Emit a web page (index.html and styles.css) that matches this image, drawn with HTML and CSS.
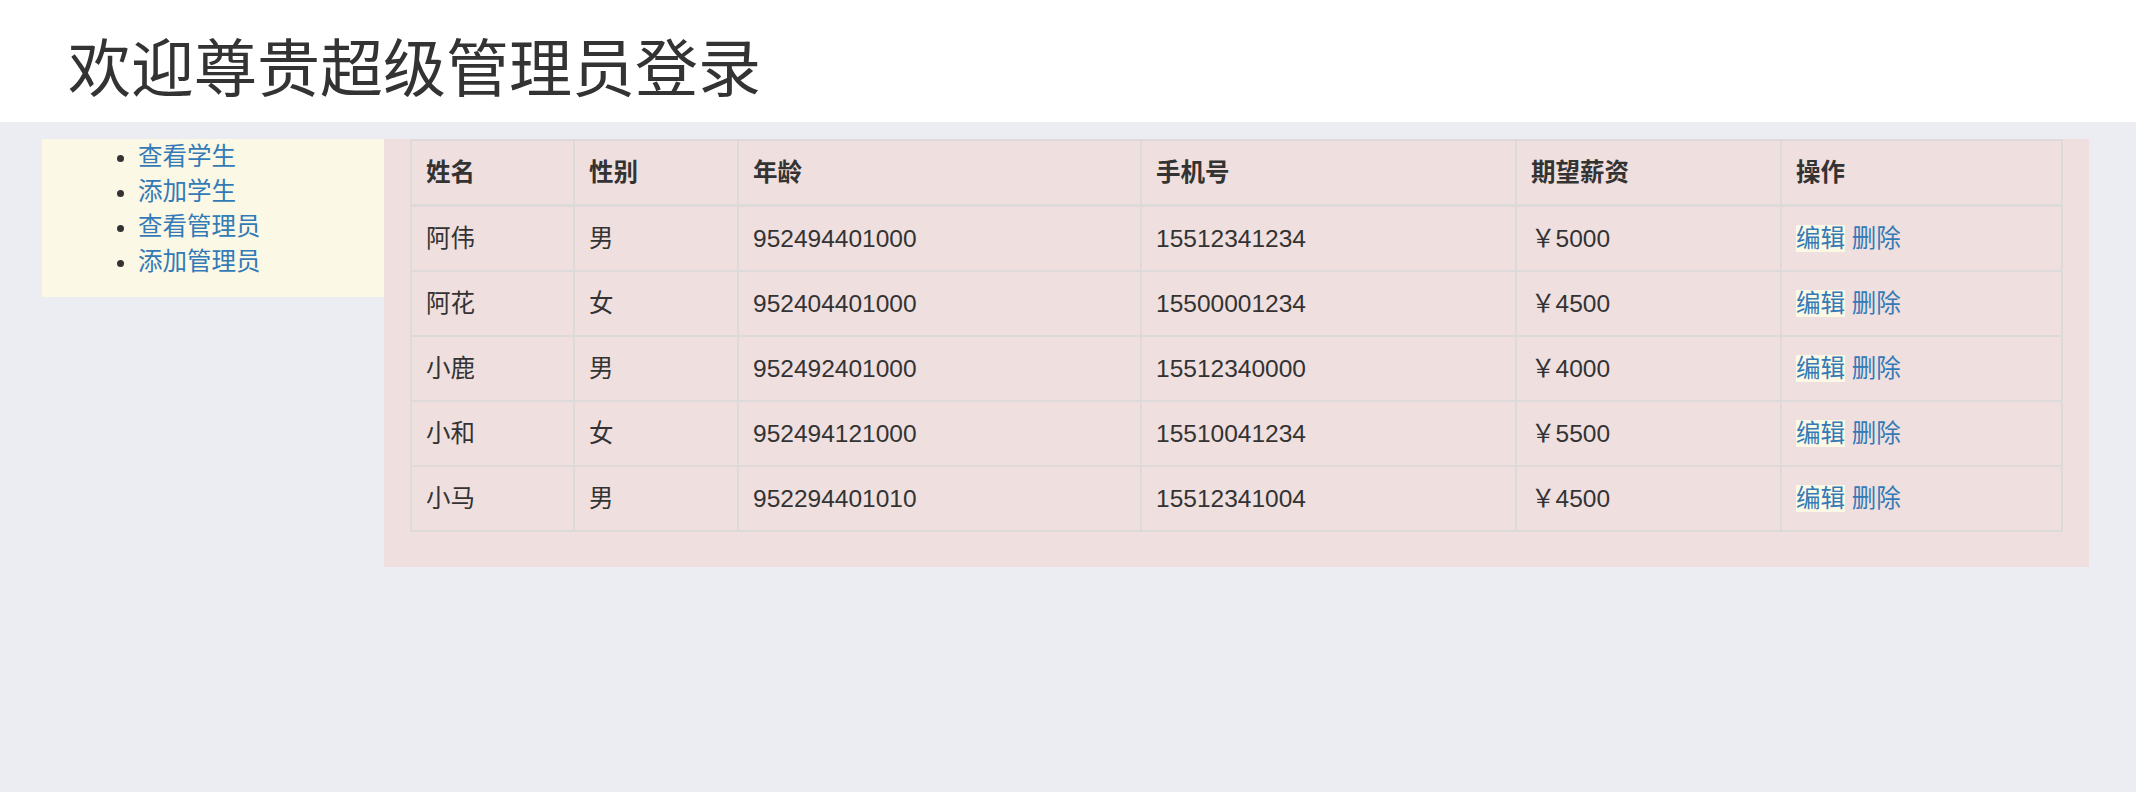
FILE: index.html
```html
<!DOCTYPE html>
<html lang="zh-CN">
<head>
<meta charset="utf-8">
<title>管理员</title>
<link rel="stylesheet" href="styles.css">
</head>
<body>
<div class="header">
  <h1 class="title">欢迎尊贵超级管理员登录</h1>
</div>
<div class="layout">
  <div class="sidebar">
    <ul class="nav-list">
      <li><a href="#">查看学生</a></li>
      <li><a href="#">添加学生</a></li>
      <li><a href="#">查看管理员</a></li>
      <li><a href="#">添加管理员</a></li>
    </ul>
  </div>
  <div class="main">
    <table class="data-table">
      <colgroup>
        <col class="c-name">
        <col class="c-sex">
        <col class="c-age">
        <col class="c-phone">
        <col class="c-salary">
        <col class="c-op">
      </colgroup>
      <thead>
        <tr><th>姓名</th><th>性别</th><th>年龄</th><th>手机号</th><th>期望薪资</th><th>操作</th></tr>
      </thead>
      <tbody>
        <tr><td>阿伟</td><td>男</td><td>952494401000</td><td>15512341234</td><td>￥5000</td><td><a href="#" class="edit">编辑</a> <a href="#">删除</a></td></tr>
        <tr><td>阿花</td><td>女</td><td>952404401000</td><td>15500001234</td><td>￥4500</td><td><a href="#" class="edit">编辑</a> <a href="#">删除</a></td></tr>
        <tr><td>小鹿</td><td>男</td><td>952492401000</td><td>15512340000</td><td>￥4000</td><td><a href="#" class="edit">编辑</a> <a href="#">删除</a></td></tr>
        <tr><td>小和</td><td>女</td><td>952494121000</td><td>15510041234</td><td>￥5500</td><td><a href="#" class="edit">编辑</a> <a href="#">删除</a></td></tr>
        <tr><td>小马</td><td>男</td><td>952294401010</td><td>15512341004</td><td>￥4500</td><td><a href="#" class="edit">编辑</a> <a href="#">删除</a></td></tr>
      </tbody>
    </table>
  </div>
</div>
</body>
</html>
```
FILE: styles.css
```css
html, body {
  margin: 0;
  padding: 0;
}
body {
  background: #ecedf2;
  color: #333333;
  font-family: "Liberation Sans", "Noto Sans CJK SC", sans-serif;
  font-size: 24.5px;
  line-height: 35px;
}
a {
  color: #337ab7;
  text-decoration: none;
}
.header {
  background: #ffffff;
  padding: 35px 0 17.5px 68px;
}
.title {
  margin: 0;
  font-family: "Liberation Sans", "Noto Sans CJK SC", sans-serif;
  font-size: 63px;
  line-height: 69.3px;
  font-weight: 400;
  color: #333333;
}
.layout {
  display: flex;
  align-items: flex-start;
  margin-top: 17.5px;
  padding: 0 47px 0 42px;
}
.sidebar {
  width: 342px;
  flex: 0 0 342px;
  box-sizing: border-box;
  background: #fbf8e6;
  padding: 0 26px 17.5px 26px;
}
.nav-list {
  margin: 0;
  padding-left: 70px;
}
.main {
  flex: 1 1 auto;
  background: #efdfdf;
  padding: 0 26px 35px 26px;
}
.data-table {
  width: 100%;
  border-collapse: collapse;
  table-layout: fixed;
  border: 2px solid #dedad9;
}
.c-name { width: 163px; }
.c-sex { width: 164px; }
.c-age { width: 403px; }
.c-phone { width: 375px; }
.c-salary { width: 265px; }
.c-op { width: auto; }
.data-table th,
.data-table td {
  border: 2px solid #dedad9;
  padding: 14px;
  text-align: left;
  line-height: 35px;
  vertical-align: top;
}
.data-table th {
  font-weight: 700;
  border-bottom-width: 3px;
}
.edit {
  background: #fbf8e6;
}
```
